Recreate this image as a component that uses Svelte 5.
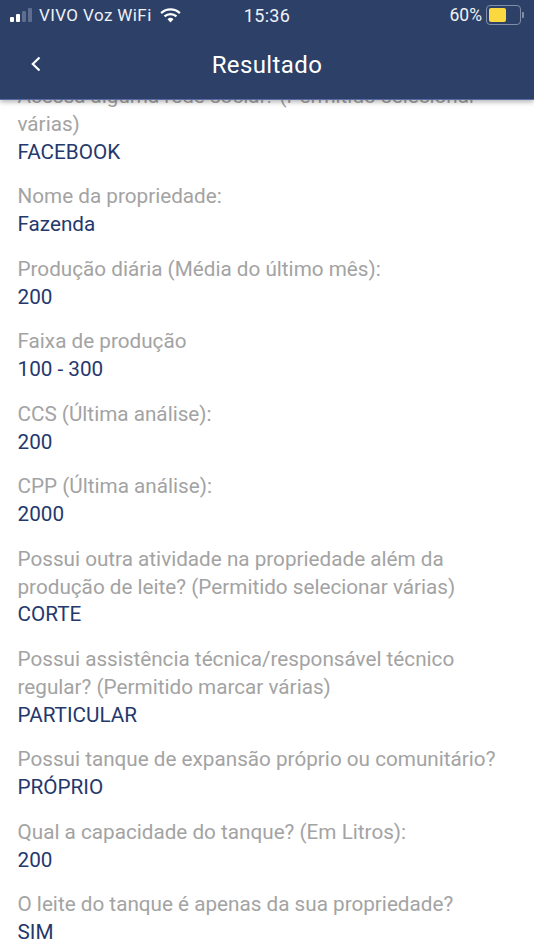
<script lang="ts">
    const answers = [
        { label: "Acessa alguma rede social? (Permitido selecionar várias)", value: "FACEBOOK" },
        { label: "Nome da propriedade:", value: "Fazenda" },
        { label: "Produção diária (Média do último mês):", value: "200" },
        { label: "Faixa de produção", value: "100 - 300" },
        { label: "CCS (Última análise):", value: "200" },
        { label: "CPP (Última análise):", value: "2000" },
        { label: "Possui outra atividade na propriedade além da produção de leite? (Permitido selecionar várias)", value: "CORTE" },
        { label: "Possui assistência técnica/responsável técnico regular? (Permitido marcar várias)", value: "PARTICULAR" },
        { label: "Possui tanque de expansão próprio ou comunitário?", value: "PRÓPRIO" },
        { label: "Qual a capacidade do tanque? (Em Litros):", value: "200" },
        { label: "O leite do tanque é apenas da sua propriedade?", value: "SIM" },
    ];
</script>

<div class="screen">
    <header class="header">
        <div class="status">
            <div class="status-left">
                <span class="signal">
                    <i class="on" style:height="5px"></i>
                    <i class="on" style:height="8px"></i>
                    <i style:height="11px"></i>
                    <i style:height="14px"></i>
                </span>
                <span class="carrier">VIVO Voz WiFi</span>
                <svg class="wifi" width="21" height="15" viewBox="0 0 22 16">
                    <path d="M1 5.5a14.5 14.5 0 0 1 20 0" fill="none" stroke="#fff" stroke-width="2.4" />
                    <path d="M4.6 9a9.4 9.4 0 0 1 12.8 0" fill="none" stroke="#fff" stroke-width="2.4" />
                    <path d="M7.8 12a4.6 4.6 0 0 1 6.4 0L11 15.4z" fill="#fff" />
                </svg>
            </div>
            <span class="clock">15:36</span>
            <div class="status-right">
                <span class="percent">60%</span>
                <span class="battery"><i></i></span>
                <span class="battery-cap"></span>
            </div>
        </div>
        <div class="title-bar">
            <svg class="back" width="14" height="20" viewBox="0 0 14 20">
                <path d="M10.5 3.5 3.8 10l6.7 6.5" fill="none" stroke="#fff" stroke-width="2.2" />
            </svg>
            <h1>Resultado</h1>
        </div>
    </header>

    <main class="content">
        <div class="list">
            {#each answers as answer}
                <div class="item">
                    <p class="label">{answer.label}</p>
                    <p class="value">{answer.value}</p>
                </div>
            {/each}
        </div>
    </main>
</div>

<style>
    :global(body) {
        margin: 0;
        background: #fff;
    }
    .screen {
        width: 534px;
        height: 950px;
        overflow: hidden;
        display: flex;
        flex-direction: column;
        font-family: Roboto, sans-serif;
    }

    /* Header */
    .header {
        height: 100px;
        flex-shrink: 0;
        background: #2c4068;
        color: #fff;
        box-shadow: 0 2px 5px rgba(0, 0, 0, 0.3);
        border-bottom: 1px solid #5a6aa8;
        box-sizing: border-box;
        position: relative;
        z-index: 1;
    }
    .status {
        height: 30px;
        padding: 0 10px;
        display: grid;
        grid-template-columns: 1fr auto 1fr;
        align-items: center;
        font-size: 17px;
        color: #eef1f6;
    }
    .status-left {
        display: flex;
        align-items: center;
        gap: 7px;
    }
    .status-right {
        display: flex;
        align-items: center;
        justify-content: flex-end;
    }
    .signal {
        display: flex;
        align-items: flex-end;
        gap: 2px;
    }
    .signal i {
        width: 4px;
        background: #5d6e8f;
        border-radius: 1px;
    }
    .signal i.on {
        background: #fff;
    }
    .carrier {
        letter-spacing: 0.4px;
    }
    .wifi {
        margin-left: 1px;
    }
    .clock {
        font-size: 18px;
        letter-spacing: 0.3px;
    }
    .percent {
        font-size: 17.5px;
    }
    .battery {
        width: 29px;
        height: 14px;
        margin-left: 4px;
        padding: 2px;
        border: 1px solid #7f8da8;
        border-radius: 4px;
        display: block;
    }
    .battery i {
        display: block;
        width: 60%;
        height: 100%;
        background: #fbd83f;
        border-radius: 2px;
    }
    .battery-cap {
        width: 2px;
        height: 6px;
        margin-left: 1px;
        background: #7f8da8;
        border-radius: 0 1px 1px 0;
    }
    .title-bar {
        height: 69px;
        position: relative;
        display: flex;
        align-items: center;
        justify-content: center;
    }
    .title-bar h1 {
        margin: 1px 0 0;
        font-size: 24px;
        font-weight: 400;
        letter-spacing: 0.4px;
    }
    .back {
        position: absolute;
        left: 29px;
        top: 24px;
    }

    /* Answers */
    .content {
        flex: 1;
        overflow: hidden;
    }
    .list {
        margin-top: -17px;
        padding: 0 18px 0 17.5px;
        display: flex;
        flex-direction: column;
        gap: 16.9px;
    }
    .label,
    .value {
        margin: 0;
        font-size: 20.7px;
        line-height: 27.8px;
    }
    .label {
        color: #a3a3a3;
    }
    .value {
        color: #24386c;
    }
</style>
